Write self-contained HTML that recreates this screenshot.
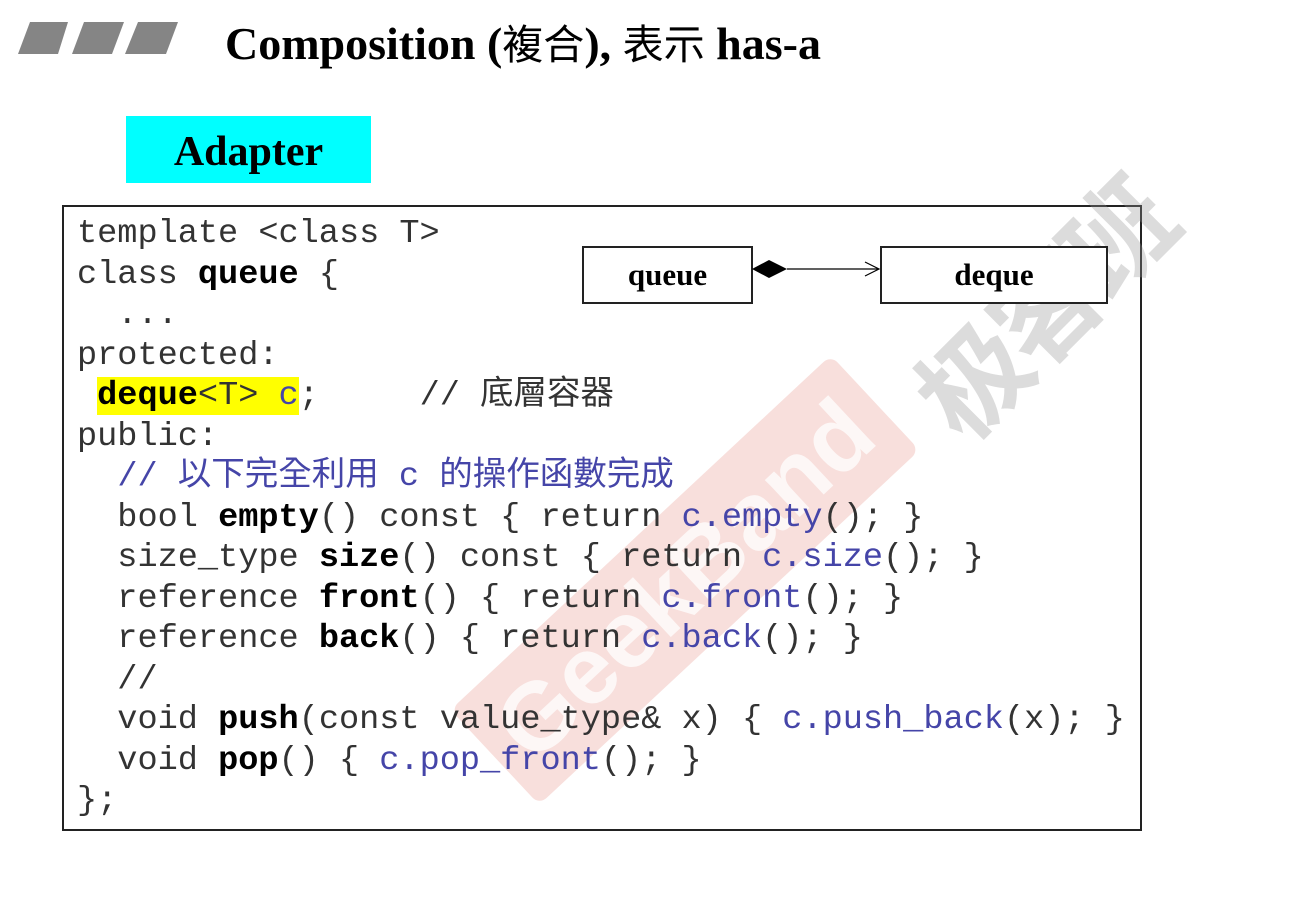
<!DOCTYPE html>
<html><head><meta charset="utf-8"><style>
body{margin:0;width:1310px;height:903px;background:#fff;position:relative;overflow:hidden}
.abs{position:absolute}
.title{left:225px;top:11px;font:bold 46px "Liberation Serif",serif;white-space:nowrap;color:#000;line-height:60px}
.title .cjk{font-family:"Noto Sans CJK TC",sans-serif;font-weight:normal;font-size:41px}
.adapter{left:126px;top:116px;width:245px;height:67px;background:#00ffff;font:bold 42px "Liberation Serif",serif;text-align:center;line-height:72px}
.box{left:62px;top:205px;width:1076px;height:622px;border:2px solid #222}
.code{position:absolute;left:77px;top:214px;margin:0;font:33.6px "Liberation Mono",monospace;color:#333}
.code div{height:40.5px;line-height:40.5px;white-space:pre}
b{font-weight:bold;color:#000}
.bl{color:#4545a8}
.cj{font-family:"Noto Sans CJK TC",sans-serif;font-size:33.5px;line-height:20px;vertical-align:baseline}
.hl{background:#ffff00}
.ub{border:2px solid #222;background:#fff;font:bold 31px "Liberation Serif",serif;text-align:center;line-height:54px}
.wm1{left:425px;top:515px;width:520px;height:130px;background:rgba(222,110,95,.22);transform:rotate(-43deg);border-radius:10px;color:rgba(255,255,255,.75);font:bold 96px "Liberation Sans",sans-serif;text-align:center;line-height:130px}
.wm2{left:850px;top:240px;width:380px;height:130px;transform:rotate(-45deg);color:rgba(150,150,150,.33);font:bold 108px "Noto Sans CJK SC",sans-serif;text-align:center;line-height:130px;letter-spacing:-6px}
</style></head><body>
<svg class="abs" style="left:0;top:0" width="200" height="60">
<polygon points="30,22 68,22 58,54 18,54" fill="#858585"/>
<polygon points="84,22 124,22 112,54 72,54" fill="#858585"/>
<polygon points="138,22 178,22 166,54 125,54" fill="#858585"/>
</svg>
<div class="abs title">Composition (<span class="cjk">複合</span>), <span class="cjk">表示</span> has-a</div>
<div class="abs adapter">Adapter</div>
<div class="abs box"></div>
<div class="abs wm1">GeekBand</div>
<div class="abs wm2">极客班</div>
<div class="code">
<div>template &lt;class T&gt;</div>
<div>class <b>queue</b> {</div>
<div>  ...</div>
<div>protected:</div>
<div> <span class="hl"><b>deque</b>&lt;T&gt; <span class="bl">c</span></span>;     // <span class="cj">底層容器</span></div>
<div>public:</div>
<div>  <span class="bl">// <span class="cj">以下完全利用</span> c <span class="cj">的操作函數完成</span></span></div>
<div>  bool <b>empty</b>() const { return <span class="bl">c.empty</span>(); }</div>
<div>  size_type <b>size</b>() const { return <span class="bl">c.size</span>(); }</div>
<div>  reference <b>front</b>() { return <span class="bl">c.front</span>(); }</div>
<div>  reference <b>back</b>() { return <span class="bl">c.back</span>(); }</div>
<div>  //</div>
<div>  void <b>push</b>(const value_type&amp; x) { <span class="bl">c.push_back</span>(x); }</div>
<div>  void <b>pop</b>() { <span class="bl">c.pop_front</span>(); }</div>
<div>};</div>
</div>
<div class="abs ub" style="left:582px;top:246px;width:167px;height:54px">queue</div>
<div class="abs ub" style="left:880px;top:246px;width:224px;height:54px">deque</div>
<svg class="abs" style="left:750px;top:255px" width="132" height="30">
<polygon points="2,14 19,5 37,14 19,23" fill="#000"/>
<line x1="37" y1="14" x2="128" y2="14" stroke="#000" stroke-width="1.2"/>
<polyline points="115,7 129,14 115,21" fill="none" stroke="#000" stroke-width="1.2"/>
</svg>
</body></html>
